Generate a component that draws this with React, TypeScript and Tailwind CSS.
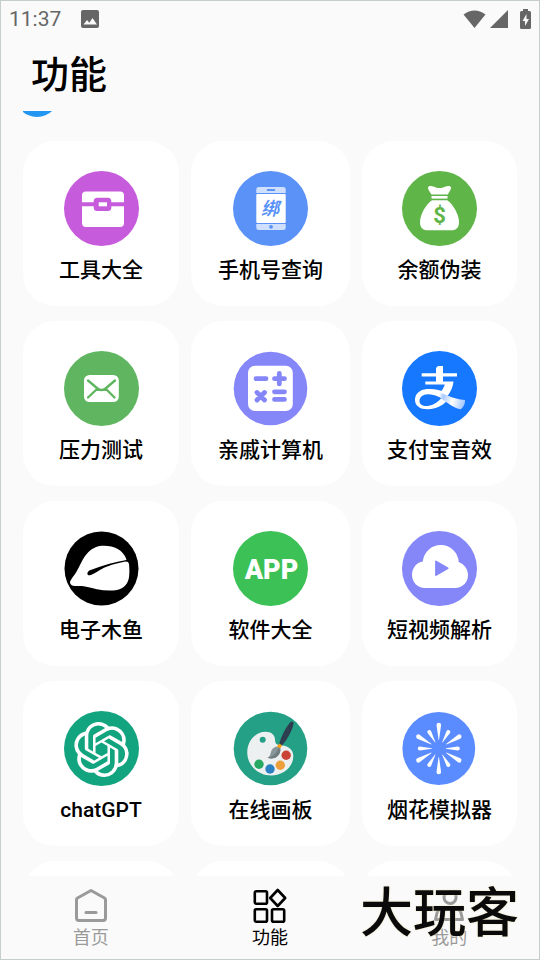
import type { ReactNode } from "react";
import { SiOpenai } from "react-icons/si";

function Disc({ color, r = 37.5, children }: { color: string; r?: number; children?: ReactNode }) {
  return (
    <svg viewBox="0 0 75 75" className="size-[75px]" aria-hidden="true">
      <circle cx="37.5" cy="37.5" r={r} fill={color} />
      {children}
    </svg>
  );
}

const ToolboxIcon = () => (
  <Disc color="#c65bdb">
    <rect x="18" y="20.5" width="42" height="35.5" rx="4" fill="#fff" />
    <path d="M18 33.3h42" stroke="#c65bdb" strokeWidth="4" />
    <rect x="29.7" y="26.7" width="17.6" height="13.2" rx="3.5" fill="#c65bdb" />
    <rect x="34.7" y="31.3" width="8.3" height="4" fill="#fff" />
  </Disc>
);

const PhoneIcon = () => (
  <Disc color="#5b92f8">
    <path d="M23.3 22v-3.5a2.5 2.5 0 0 1 2.5-2.5h24.4a2.5 2.5 0 0 1 2.5 2.5V22z" fill="#cfe0ff" />
    <path d="M23.3 53v3.5a2.5 2.5 0 0 0 2.5 2.5h24.4a2.5 2.5 0 0 0 2.5-2.5V53z" fill="#cfe0ff" />
    <rect x="23.3" y="23" width="29.4" height="29" rx="1" fill="#fff" />
    <rect x="33.7" y="18" width="8.6" height="2" rx="1" fill="#5b92f8" />
    <circle cx="38" cy="55.8" r="1.9" fill="#5b92f8" />
    <text x="37" y="43.5" textAnchor="middle" fill="#5b92f8" className="text-[18px] font-bold italic">
      绑
    </text>
  </Disc>
);

const MoneyIcon = () => (
  <Disc color="#5fb548">
    <path d="M26 17c0-2 2-2.300 4-1.800 3 .8 5 1.800 7.500 1.800s4.500-1 7.500-1.800c2-.5 4-.2 4 1.800 0 2-2 4-3.200 6.400H29.400C28.200 21 26 19 26 17z" fill="#fff" />
    <rect x="29.500" y="25" width="16" height="2.600" fill="#fff" />
    <path d="M30 29.200h15.300C51 33.500 57 43 57 51.500c0 5-3 7.800-7.500 7.800h-24c-4.500 0-7.500-2.800-7.500-7.800 0-8.500 6-18 12-22.300z" fill="#fff" />
    <text x="37.5" y="51.500" textAnchor="middle" fill="#5fb548" className="text-[22px] font-bold">
      $
    </text>
  </Disc>
);

const MailIcon = () => (
  <Disc color="#60b660">
    <rect x="20" y="24" width="34.800" height="27" rx="5.500" fill="#fff" />
    <path
      d="M24 29.500l9.500 8q4 3.200 8 0l9.500-8M33 38l-9 8.500M42 38l8.500 8.500"
      fill="none"
      stroke="#60b660"
      strokeWidth="2.400"
      strokeLinecap="round"
    />
  </Disc>
);

const CalculatorIcon = () => (
  <Disc color="#8587f8" r={36.8}>
    <rect x="15" y="14.700" width="44.800" height="45.300" rx="7" fill="#fff" />
    <path
      d="M23 27.700h10M41.500 27.700h10M46.300 22.500v10.400M24 41.500l7.500 7.500M31.500 41.500L24 49M41.500 40.800h10M41.500 48.400h10"
      stroke="#8587f8"
      strokeWidth="4.800"
      strokeLinecap="round"
    />
  </Disc>
);

const AlipayIcon = () => (
  <Disc color="#1677ff">
    <defs>
      <linearGradient id="ribbon" x1="36" y1="44" x2="63" y2="52" gradientUnits="userSpaceOnUse">
        <stop offset="0" stopColor="#fff" />
        <stop offset="0.200" stopColor="#a9cbff" />
        <stop offset="0.550" stopColor="#fff" />
        <stop offset="1" stopColor="#9cc4ff" />
      </linearGradient>
    </defs>
    <path d="M34 17l2-2h5v7.200h14v3.300H41v4.900h10.500c-.5 5-2.500 10-6 14.600L38 41.500c2.300-2.600 4-5.200 4.800-8.100H23.300v-3H34v-4.900H19.700v-3.300H34z" fill="#fff" />
    <path
      d="M39.500 47c-3.500 4-7.500 6.600-12.500 7.800-5 1.100-9.500-.8-9.500-4.800 0-4 3.500-7.200 9.500-6.800 4.500.3 8.500 2 12.500 3.800l5.800-5C38 38.500 31.500 37.500 25 38c-7.500.6-12 5-12 10.800 0 6.500 5.500 9.700 13 9.500 8-.2 14.500-3.500 19-8.500z"
      fill="#fff"
    />
    <path d="M38 41.500l7.500 3C51 47 57 48.800 63 49c.3 3.500-1 7-4.200 9.200C52 57.500 45 51.500 38.500 47z" fill="url(#ribbon)" />
  </Disc>
);

const WoodenFishIcon = () => (
  <Disc color="#000" r={37}>
    <path
      d="M6 51.500c0-2 3-5.500 6-10C16 35 18.500 27 24 21.500c5-5 10-6.700 16-6.700 10 0 19 4 22.500 13.700L61 30.300c2.500 0 3.800 1 4 3 .5 4 .6 9 0 13-1 6.500-5 11.500-12 12.700-12 2-22-1.500-32-3.500-4-.8-7-.4-10-.5-3-.2-5-1.500-5-3.500z"
      fill="#fff"
    />
    <path d="M64 28.800C52 31 39 34 26 39.200c-3.500 1.500-3.500 5.500 0 5 4-1 8-4.500 14-7.500 7-3 14-4.800 24-6.700z" fill="#000" />
  </Disc>
);

const AppIcon = () => (
  <Disc color="#3bc155">
    <text x="38.500" y="47.500" textAnchor="middle" fill="#fff" className="text-[27px] font-black">
      APP
    </text>
  </Disc>
);

const CloudIcon = () => (
  <Disc color="#8587f8">
    <path d="M20.800 30.500A18 18 0 0 1 56.700 31C62 33 66 38 66 44c0 7.500-5.500 13-13 13H23C15.500 57 10 51 10 44c0-7 4.500-12.500 10.800-13.500z" fill="#fff" />
    <path d="M34 30.500v13.500l11.700-6.800z" fill="#8587f8" stroke="#8587f8" strokeWidth="1.800" strokeLinejoin="round" />
  </Disc>
);

const ChatIcon = () => (
  <Disc color="#12a37f">
    <SiOpenai x="10" y="11" size={55} color="#fff" />
  </Disc>
);

const PaletteIcon = () => (
  <Disc color="#23a085" r={36.8}>
    <path
      d="M14.300 40C15 29 23 20.700 32.500 20.700c6 0 9.500 3.500 9.500 8 0 3.500 1.500 5.300 5 5.600 8 .2 13.300 4 13.300 11C60.300 56 50 64.500 38 64.500 24 64.500 13.500 53 14.300 40z"
      fill="#ecf0f1"
    />
    <circle cx="29.700" cy="28.700" r="3" fill="#23a085" />
    <circle cx="26" cy="53.300" r="4.700" fill="#27a862" />
    <circle cx="37" cy="58" r="4.700" fill="#2a80c0" />
    <circle cx="47.300" cy="54.300" r="4.700" fill="#eda03a" />
    <circle cx="53.200" cy="44.300" r="4.700" fill="#cb4335" />
    <path d="M57 11.500c1.500-2 4-1 3.500 1.500-1.500 7-6 15-11.500 21.500l-2.800-1.800C48.500 25 52 17.500 57 11.500z" fill="#2c3e50" />
    <path d="M46.200 32.500l2.800 1.800-2 3.700-3.200-2z" fill="#f39c12" />
    <path d="M43.500 35.500l3.800 2.300c.5 4-2 8-5.800 9.200-2.500.8-5 .5-7-.3 2.500-1 2.700-3.200 3.500-6 .8-2.700 3-4.700 5.500-5.200z" fill="#8a979a" />
    <path d="M47.300 37.800c.5 4-2 8-5.800 9.200-2.500.8-5 .5-7-.3 5-.7 9-3.700 11-9.900z" fill="#707e80" />
  </Disc>
);

const LONG_RAYS = [30, 90, 150, 210, 270, 330];
const SHORT_RAYS = [0, 60, 120, 180, 240, 300];

const FireworkIcon = () => (
  <svg viewBox="0 0 75 75" className="size-[75px]" aria-hidden="true">
    <circle cx="36.800" cy="37.500" r="36.400" fill="#5a8bff" />
    <g transform="translate(36.800 37.500)" fill="#fff">
      {LONG_RAYS.map((angle) => (
        <path key={angle} d="M8.500 -.2L23.500 -2.300a2.300 2.300 0 0 1 0 4.600L8.500 .2z" transform={`rotate(${angle})`} />
      ))}
      {SHORT_RAYS.map((angle) => (
        <path key={angle} d="M7 -.2L19 -2a2 2 0 0 1 0 4L7 .2z" transform={`rotate(${angle})`} />
      ))}
    </g>
  </svg>
);

const FEATURES = [
  { label: "工具大全", Icon: ToolboxIcon },
  { label: "手机号查询", Icon: PhoneIcon },
  { label: "余额伪装", Icon: MoneyIcon },
  { label: "压力测试", Icon: MailIcon },
  { label: "亲戚计算机", Icon: CalculatorIcon },
  { label: "支付宝音效", Icon: AlipayIcon },
  { label: "电子木鱼", Icon: WoodenFishIcon },
  { label: "软件大全", Icon: AppIcon },
  { label: "短视频解析", Icon: CloudIcon },
  { label: "chatGPT", Icon: ChatIcon },
  { label: "在线画板", Icon: PaletteIcon },
  { label: "烟花模拟器", Icon: FireworkIcon },
];

const HomeIcon = () => (
  <svg viewBox="0 0 36 36" className="size-9" fill="none" stroke="currentColor" strokeWidth="3" strokeLinejoin="round" strokeLinecap="round" aria-hidden="true">
    <path d="M18 2.500L31.500 10q1 .6 1 1.800V30q0 2.500-2.500 2.500H6Q3.500 32.500 3.500 30V11.800q0-1.200 1-1.800z" />
    <path d="M13 24.500h10" />
  </svg>
);

const GridIcon = () => (
  <svg viewBox="0 0 36 36" className="size-9" fill="none" stroke="currentColor" strokeWidth="2.600" strokeLinejoin="round" aria-hidden="true">
    <rect x="2.800" y="3.300" width="12.200" height="12.500" rx="1.500" />
    <rect x="2.800" y="21.300" width="12.200" height="12.500" rx="1.500" />
    <rect x="20" y="21.300" width="12.200" height="12.500" rx="1.500" />
    <path d="M25.700 2l7.500 8-7.500 8-7.500-8z" />
  </svg>
);

const PersonIcon = () => (
  <svg viewBox="0 0 36 36" className="size-9" fill="none" stroke="currentColor" strokeWidth="3" strokeLinejoin="round" aria-hidden="true">
    <path d="M25 3.500V10a6 6 0 1 1-6-6.500z" />
    <path d="M11 21h14q4 0 5 4l1.500 6.500h-27L6 25q1-4 5-4z" />
  </svg>
);

const TABS = [
  { label: "首页", Icon: HomeIcon, active: false },
  { label: "功能", Icon: GridIcon, active: true },
  { label: "我的", Icon: PersonIcon, active: false },
];

export default function App() {
  return (
    <div className="relative flex h-screen flex-col overflow-hidden border border-[#c5cecc] bg-[#fafafa] font-[Roboto,'Noto_Sans_CJK_SC',sans-serif] text-black">
      <div className="flex h-9 shrink-0 items-center px-2 text-[#666]">
        <span className="text-[21px] leading-9">11:37</span>
        <svg viewBox="0 0 18 18" className="ml-5 size-[18px]" aria-hidden="true">
          <rect width="18" height="18" rx="2" fill="currentColor" />
          <path d="M2.500 14.500L6 10l2.300 2.700L11.500 8l4.500 6.500z" fill="#fafafa" />
        </svg>
        <div className="ml-auto flex items-center gap-1">
          <svg viewBox="0 0 23 18" className="h-[18px] w-[23px]" aria-hidden="true">
            <path d="M.5 4.500Q11.500-3.500 22.500 4.500L11.500 18z" fill="currentColor" />
          </svg>
          <svg viewBox="0 0 18 18" className="size-[18px]" aria-hidden="true">
            <path d="M18 0v18H0z" fill="currentColor" />
          </svg>
          <svg viewBox="0 0 11 20" className="ml-2 h-5 w-[11px]" aria-hidden="true">
            <path d="M3 0h5v2h1.500Q11 2 11 3.500v15q0 1.500-1.500 1.500h-8Q0 20 0 18.500v-15Q0 2 1.500 2H3z" fill="currentColor" />
            <path d="M6.500 5L2.500 12H5v5l4-7H6.500z" fill="#fafafa" />
          </svg>
        </div>
      </div>

      <header className="shrink-0 px-[30px] pt-[10px] pb-[7px]">
        <h1 className="text-[38px] leading-[57px] font-medium">功能</h1>
      </header>

      <main className="min-h-0 flex-1 overflow-y-auto px-[22px] [scrollbar-width:none]">
        <div className="flex h-[6px] items-end overflow-hidden">
          <span className="-ml-2 size-11 shrink-0 rounded-full bg-[#2196f3]" />
        </div>
        <div className="mt-6 grid grid-cols-[156fr_159fr_155fr] gap-x-3 gap-y-[15px]">
          {FEATURES.map(({ label, Icon }) => (
            <button key={label} type="button" className="flex h-[165px] flex-col items-center rounded-[32px] bg-white pt-[30px]">
              <Icon />
              <span className="mt-[9px] text-[21px] leading-[30px] font-medium whitespace-nowrap">{label}</span>
            </button>
          ))}
          <div className="h-[165px] rounded-[32px] bg-white" />
          <div className="h-[165px] rounded-[32px] bg-white" />
          <div className="h-[165px] rounded-[32px] bg-white" />
        </div>
      </main>

      <nav className="grid h-[83px] shrink-0 grid-cols-3">
        {TABS.map(({ label, Icon, active }) => (
          <button
            key={label}
            type="button"
            aria-current={active ? "page" : undefined}
            className={`flex flex-col items-center pt-3 ${active ? "text-black" : "text-[#9a9a9a]"}`}
          >
            <Icon />
            <span className="mt-0.5 text-[18px] leading-6">{label}</span>
          </button>
        ))}
      </nav>

      <div className="absolute right-5 bottom-[18px] text-[53px] leading-[54px] font-medium text-[#0a0a0a] [text-shadow:0_0_2px_#e6dcae]">
        大玩客
      </div>
    </div>
  );
}
